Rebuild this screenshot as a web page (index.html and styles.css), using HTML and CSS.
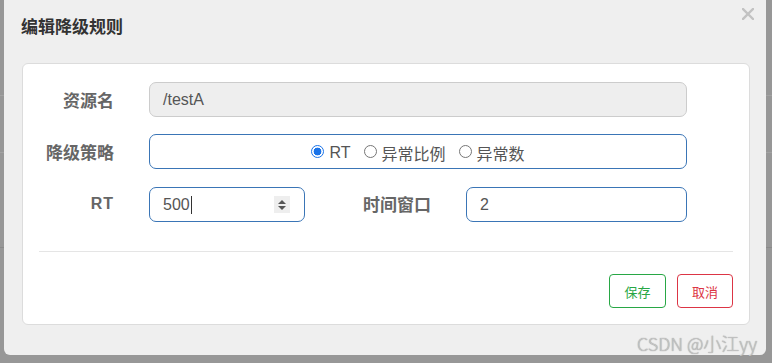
FILE: index.html
```html
<!DOCTYPE html>
<html lang="zh-CN">
<head>
    <meta charset="UTF-8">
    <title>编辑降级规则</title>
    <link rel="stylesheet" href="styles.css">
</head>
<body>

<!-- Page behind the overlay -->
<div class="page">
    <div class="page-row row-a"></div>
    <div class="page-row row-b"></div>
    <div class="page-row row-c"></div>
</div>

<!-- Modal -->
<div class="modal">
    <div class="modal-header">
        <h4>编辑降级规则</h4>
        <svg class="close" width="12" height="12" viewBox="0 0 12 12">
            <path d="M1 1 L11 11 M11 1 L1 11" stroke="#c2c2c2" stroke-width="2.4" stroke-linecap="square"/>
        </svg>
    </div>

    <div class="panel">
        <div class="form-grid">
            <label class="label">资源名</label>
            <div class="field field-disabled span-3">/testA</div>

            <label class="label">降级策略</label>
            <div class="field field-active span-3 radios">
                <span class="radio checked"></span><span class="radio-text">RT</span>
                <span class="radio"></span><span class="radio-text">异常比例</span>
                <span class="radio"></span><span class="radio-text">异常数</span>
            </div>

            <label class="label label-latin">RT</label>
            <div class="field field-active number">
                <span class="value">500</span><span class="caret"></span>
                <span class="spinner">
                    <svg width="10" height="14" viewBox="0 0 10 14">
                        <path d="M1 6 L5 2 L9 6 Z M1 8 L5 12 L9 8 Z" fill="#555"/>
                    </svg>
                </span>
            </div>
            <label class="label">时间窗口</label>
            <div class="field field-active">2</div>
        </div>

        <div class="divider"></div>

        <div class="actions">
            <button class="btn btn-save">保存</button>
            <button class="btn btn-cancel">取消</button>
        </div>
    </div>
</div>

<div class="watermark">CSDN @小江yy</div>

</body>
</html>
```

FILE: styles.css
```css
/* Global */
body {
    margin: 0;
    padding: 0;
    width: 772px;
    height: 363px;
    overflow: hidden;
    background-color: #979797;
    font-family: "Liberation Sans", "Noto Sans CJK SC", sans-serif;
    color: #333;
    position: relative;
}

/* Page behind */
.page-row {
    border-bottom: 1px solid #8c8c8c;
}

.row-a { height: 95px; border-bottom-color: #a3a3a3; }
.row-b { height: 56px; border-bottom-color: #a3a3a3; }
.row-c { height: 94px; border-bottom-color: #8a8a8a; }

/* Modal */
.modal {
    position: absolute;
    left: 4px;
    top: 0;
    width: 762px;
    height: 355px;
    background-color: #efefef;
    border-radius: 0 0 6px 6px;
    box-sizing: border-box;
    padding: 0 16px 0 18px;
}

.modal-header {
    height: 63px;
    display: flex;
    align-items: flex-start;
    justify-content: space-between;
}

.modal-header h4 {
    margin: 15px 0 0 -1px;
    font-family: "Noto Sans CJK SC", sans-serif;
    font-size: 17px;
    font-weight: 700;
    line-height: 22px;
    color: #333;
}

.close {
    margin-top: 8px;
    margin-right: -4px;
}

/* Inner panel */
.panel {
    background: #fff;
    border: 1px solid #dcdcdc;
    border-radius: 6px;
    height: 262px;
    box-sizing: border-box;
    padding: 18px 16px 0 16px;
}

.form-grid {
    display: grid;
    grid-template-columns: 75px 156px 91px 221px;
    column-gap: 35px;
    row-gap: 17px;
    align-items: center;
}

.form-grid .field:nth-of-type(3),
.form-grid .field:last-child {
    margin-top: 1px;
}

.label {
    font-family: "Noto Sans CJK SC", sans-serif;
    font-size: 17px;
    font-weight: 700;
    color: #666;
    text-align: right;
    line-height: 20px;
}

.label-latin {
    font-family: "Liberation Sans", sans-serif;
    font-size: 16px;
    letter-spacing: 1px;
}

.span-3 {
    grid-column: span 3;
}

.field {
    height: 35px;
    box-sizing: border-box;
    border: 1px solid #ccc;
    border-radius: 7px;
    padding: 0 13px;
    display: flex;
    align-items: center;
    font-size: 16px;
    color: #555;
}

.field-disabled {
    background-color: #eee;
}

.field-active {
    border-color: #3a75b6;
}

/* Radios */
.radios {
    justify-content: center;
    padding-top: 2px;
}

.radio {
    width: 11px;
    height: 11px;
    border: 1px solid #767676;
    border-radius: 50%;
    box-sizing: content-box;
    margin-right: 5px;
    margin-bottom: 2px;
}

.radio.checked {
    border-color: #1a73e8;
    background: radial-gradient(circle, #1a73e8 0 3.6px, #fff 4.2px);
}

.radio-text {
    font-family: "Liberation Sans", "Noto Sans CJK SC", sans-serif;
    color: #555;
    margin-right: 13px;
}

.radio-text:last-child {
    margin-right: 0;
}

/* Number field */
.number .caret {
    width: 1px;
    height: 18px;
    background: #333;
    margin-left: 1px;
}

.number .spinner {
    margin-left: auto;
    margin-right: 1px;
    width: 16px;
    height: 17px;
    background: #eee;
    display: flex;
    align-items: center;
    justify-content: center;
}

/* Divider */
.divider {
    height: 1px;
    background: #e5e5e5;
    margin-top: 29px;
}

/* Buttons */
.actions {
    display: flex;
    justify-content: flex-end;
    gap: 11px;
    margin-top: 22px;
}

.btn {
    height: 34px;
    width: 57px;
    background: #fff;
    border-radius: 4px;
    font-family: "Noto Sans CJK SC", sans-serif;
    font-size: 13px;
    padding: 0;
}

.btn-save {
    border: 1px solid #28a745;
    color: #28a745;
}

.btn-cancel {
    border: 1px solid #dc3545;
    color: #dc3545;
    width: 56px;
}

/* Watermark */
.watermark {
    position: absolute;
    right: 15px;
    bottom: 9px;
    font-family: "Noto Sans CJK SC", sans-serif;
    font-size: 18px;
    font-weight: 300;
    color: #c4c4c4;
    text-shadow: 0 0 1px #888;
    line-height: 22px;
}
```
